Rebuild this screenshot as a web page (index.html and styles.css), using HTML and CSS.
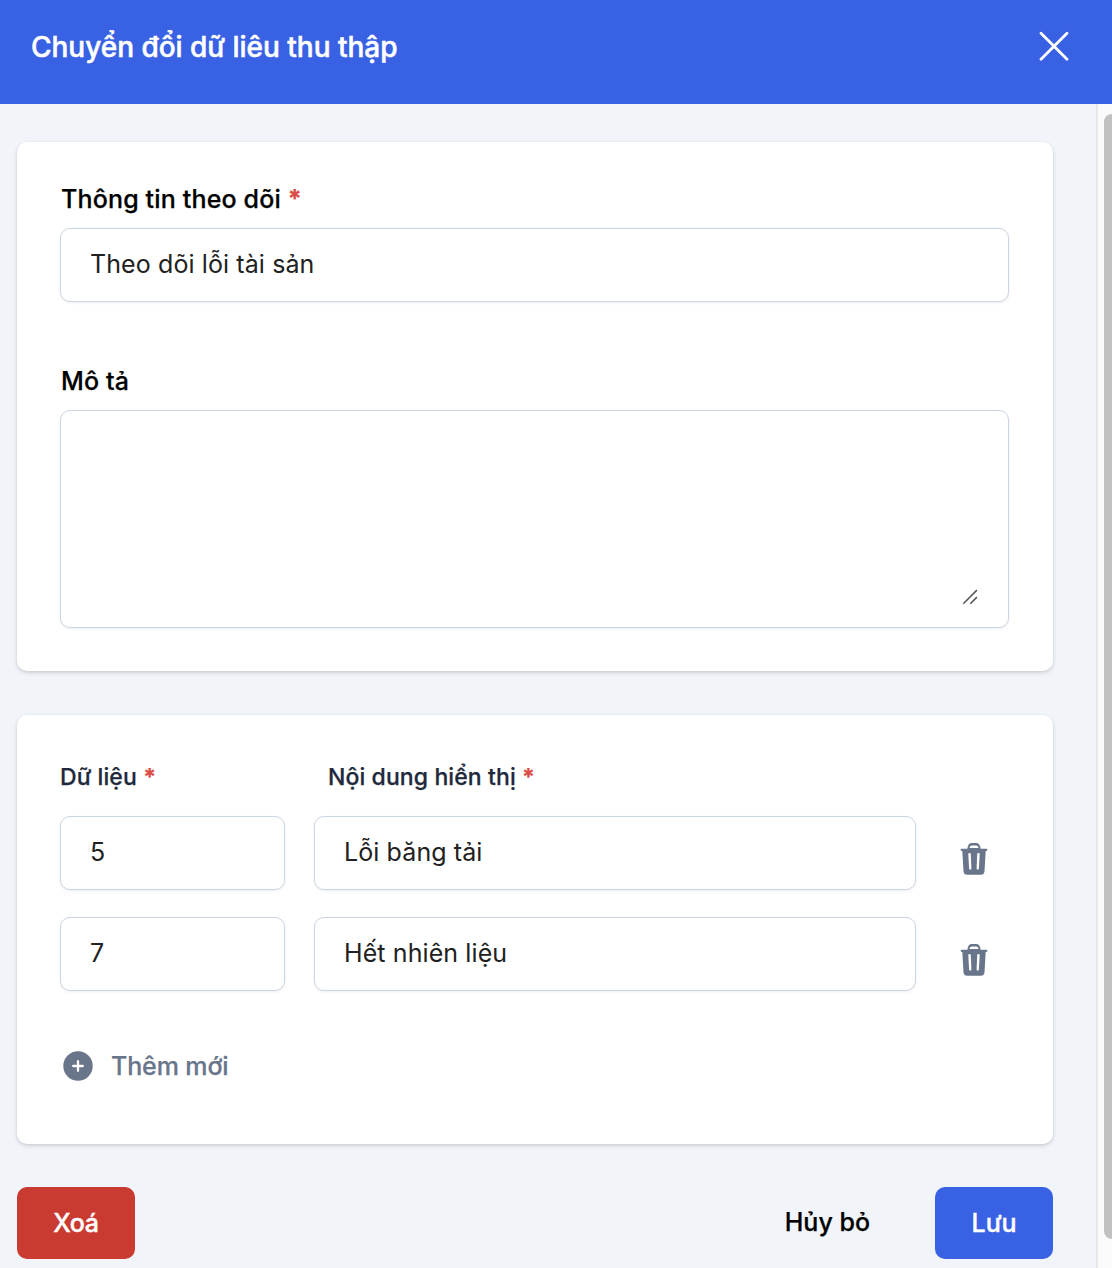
FILE: index.html
```html
<!DOCTYPE html>
<html lang="vi">
<head>
<meta charset="utf-8">
<title>Chuyển đổi dữ liêu thu thập</title>
<link rel="stylesheet" href="styles.css">
</head>
<body>
<div class="dialog">
  <header class="header">
    <h1 class="title">Chuyển đổi dữ liêu thu thập</h1>
    <button class="icon-btn" aria-label="Đóng">
      <svg width="30" height="30" viewBox="0 0 30 30" fill="none" stroke="#fff" stroke-width="2.8" stroke-linecap="round"><path d="M2 2.300 28 28.300M28 2.300 2 28.300"/></svg>
    </button>
  </header>
  <div class="main">
    <form class="content">
      <section class="card card-info">
        <label class="label label-info" for="info"><span>Thông tin theo dõi</span> <span class="req">*</span></label>
        <input class="field" id="info" value="Theo dõi lỗi tài sản">
        <label class="label label-desc" for="desc"><span>Mô tả</span></label>
        <div class="area">
          <textarea class="area-text" id="desc"></textarea>
          <svg class="grip" width="16" height="16" viewBox="0 0 16 16" fill="none" stroke="#555" stroke-width="1.5"><path d="M1.3 14.7 14.9 1.1M8.3 14.7 14.9 8.1"/></svg>
        </div>
      </section>
      <section class="card card-data">
        <div class="cols heads">
          <span class="head"><span>Dữ liệu</span> <span class="req">*</span></span>
          <span class="head head-wide"><span>Nội dung hiển thị</span> <span class="req">*</span></span>
        </div>
        <div class="cols">
          <input class="field" value="5" aria-label="Dữ liệu">
          <input class="field" value="Lỗi băng tải" aria-label="Nội dung hiển thị">
          <button type="button" class="icon-btn trash" aria-label="Xoá dòng">
            <svg width="28" height="32" viewBox="0 0 28 32"><path fill="#68758b" fill-rule="evenodd" d="M7.400 5.700C7.700 2 9.200.1 12 .1h4c2.800 0 4.300 1.900 4.600 5.600H26.300a1 1 0 0 1 0 2.200H25.700L24.500 28.300c-.2 2.400-1.500 3.500-3.700 3.500H7.200c-2.200 0-3.500-1.100-3.700-3.500L2.300 7.900h-.6a1 1 0 0 1 0-2.200zM9.500 5h9c-.2-1.700-1.100-2.500-2.700-2.500h-3.600C10.600 2.500 9.700 3.300 9.500 5zM8.300 11.200a1.200 1.200 0 0 1 2.500-.1l.6 14.400a1.150 1.150 0 0 1-2.300.1zM17.200 11.100a1.200 1.200 0 0 1 2.500.1l-.8 14.400a1.150 1.150 0 0 1-2.300-.1z"/></svg>
          </button>
        </div>
        <div class="cols">
          <input class="field" value="7" aria-label="Dữ liệu">
          <input class="field" value="Hết nhiên liệu" aria-label="Nội dung hiển thị">
          <button type="button" class="icon-btn trash" aria-label="Xoá dòng">
            <svg width="28" height="32" viewBox="0 0 28 32"><path fill="#68758b" fill-rule="evenodd" d="M7.400 5.700C7.700 2 9.200.1 12 .1h4c2.800 0 4.300 1.900 4.600 5.600H26.300a1 1 0 0 1 0 2.200H25.700L24.500 28.300c-.2 2.400-1.500 3.500-3.700 3.500H7.200c-2.200 0-3.500-1.100-3.700-3.500L2.300 7.900h-.6a1 1 0 0 1 0-2.200zM9.500 5h9c-.2-1.700-1.100-2.500-2.700-2.500h-3.600C10.600 2.500 9.700 3.300 9.500 5zM8.300 11.200a1.200 1.200 0 0 1 2.500-.1l.6 14.400a1.150 1.150 0 0 1-2.300.1zM17.200 11.100a1.200 1.200 0 0 1 2.500.1l-.8 14.400a1.150 1.150 0 0 1-2.300-.1z"/></svg>
          </button>
        </div>
        <button type="button" class="add">
          <svg width="30" height="30" viewBox="0 0 30 30"><circle cx="15" cy="15" r="14.700" fill="#68758b"/><path d="M15 10.200v9.600M10.200 15h9.600" stroke="#fff" stroke-width="2.300" stroke-linecap="round"/></svg>
          <span>Thêm mới</span>
        </button>
      </section>
      <footer class="actions">
        <button type="button" class="btn btn-danger">Xoá</button>
        <button type="button" class="btn btn-plain">Hủy bỏ</button>
        <button type="button" class="btn btn-primary">Lưu</button>
      </footer>
    </form>
    <div class="scrollbar"><div class="thumb"></div></div>
  </div>
</div>
</body>
</html>
```
FILE: styles.css
```css
* { box-sizing: border-box; }
body { margin: 0; font-family: Inter, "Liberation Sans", sans-serif; }
button, input, textarea { font-family: inherit; margin: 0; }
button { border: 0; padding: 0; background: none; }
svg { flex: none; }
.dialog { width: 1112px; height: 1268px; overflow: hidden; display: flex; flex-direction: column; background: #f1f5fa; }
.header { height: 104px; flex: none; display: flex; justify-content: space-between; align-items: flex-start; padding: 29px 43px 0 31px; background: #3961e4; }
.title { margin: 0; font-size: 28px; font-weight: 500; line-height: 36px; letter-spacing: -.02px; color: #fff; white-space: nowrap; -webkit-text-stroke: .5px #fff; }
.icon-btn { display: flex; }
.header .icon-btn { margin-top: 2px; }
.main { flex: 1; display: flex; min-height: 0; }
.content { flex: 1; padding: 38px 43px 0 17px; display: flex; flex-direction: column; }
.card { flex: none; background: #fff; border-radius: 10px; box-shadow: 0 2px 5px rgba(0,0,0,.1), 0 1px 3px rgba(0,0,0,.1); padding: 0 44px 0 43px; display: flex; flex-direction: column; }
.card-info { height: 529px; padding-top: 38px; }
.card-data { height: 429px; margin-top: 44px; padding-top: 44px; }
.label { font-size: 25px; font-weight: 500; line-height: 38px; letter-spacing: .16px; color: #000; padding-left: 1px; margin-bottom: 10px; white-space: nowrap; -webkit-text-stroke: .25px; }
.label-desc { margin-top: 60px; }
.req { color: #dc4c46; font-weight: 700; }
.field, .area { width: 100%; border: 1px solid #ccd5e3; border-radius: 10px; background: #fff; box-shadow: 0 1px 3px rgba(0,0,0,.07); }
.field { height: 74px; flex: none; padding: 0 29px 3px; font-size: 25px; letter-spacing: .1px; color: #212121; }
.area { height: 218px; padding: 22px 30px; position: relative; }
.area-text { display: block; width: 100%; height: 100%; border: 0; padding: 0; resize: none; outline: 0; }
.grip { position: absolute; right: 30px; bottom: 22px; }
.cols { display: grid; grid-template-columns: 225px 602px 44px; column-gap: 29px; margin-bottom: 27px; }
.cols .trash { margin: 27px 0 0 15px; align-self: start; }
.heads { margin-bottom: 21px; }
.head { font-size: 23px; font-weight: 500; line-height: 36px; letter-spacing: .1px; color: #1e293b; white-space: nowrap; -webkit-text-stroke: .25px; }
.head-wide { padding-left: 14px; }
.add { display: flex; align-items: center; align-self: flex-start; gap: 18px; margin: 30px 0 0 3px; font-size: 25px; font-weight: 500; line-height: 36px; letter-spacing: -.12px; color: #68758b; -webkit-text-stroke: .25px; }
.actions { display: flex; margin-top: 43px; }
.btn { height: 72px; border-radius: 10px; padding-bottom: 1px; font-size: 25px; font-weight: 500; letter-spacing: 0; color: #000; -webkit-text-stroke: .25px; }
.btn-danger { width: 118px; background: #c93a31; color: #fff; letter-spacing: -.3px; -webkit-text-stroke: .4px #fff; }
.btn-plain { margin-left: auto; margin-right: 65px; padding-bottom: 2px; }
.btn-primary { width: 118px; background: #3961e4; color: #fff; -webkit-text-stroke: .4px #fff; }
.scrollbar { width: 16px; flex: none; border-left: 2px solid #e8e8e8; background: #fafafa; padding: 10px 0 29px 6px; }
.thumb { height: 100%; border-radius: 8px 0 0 8px; background: #c1c1c1; }
```
